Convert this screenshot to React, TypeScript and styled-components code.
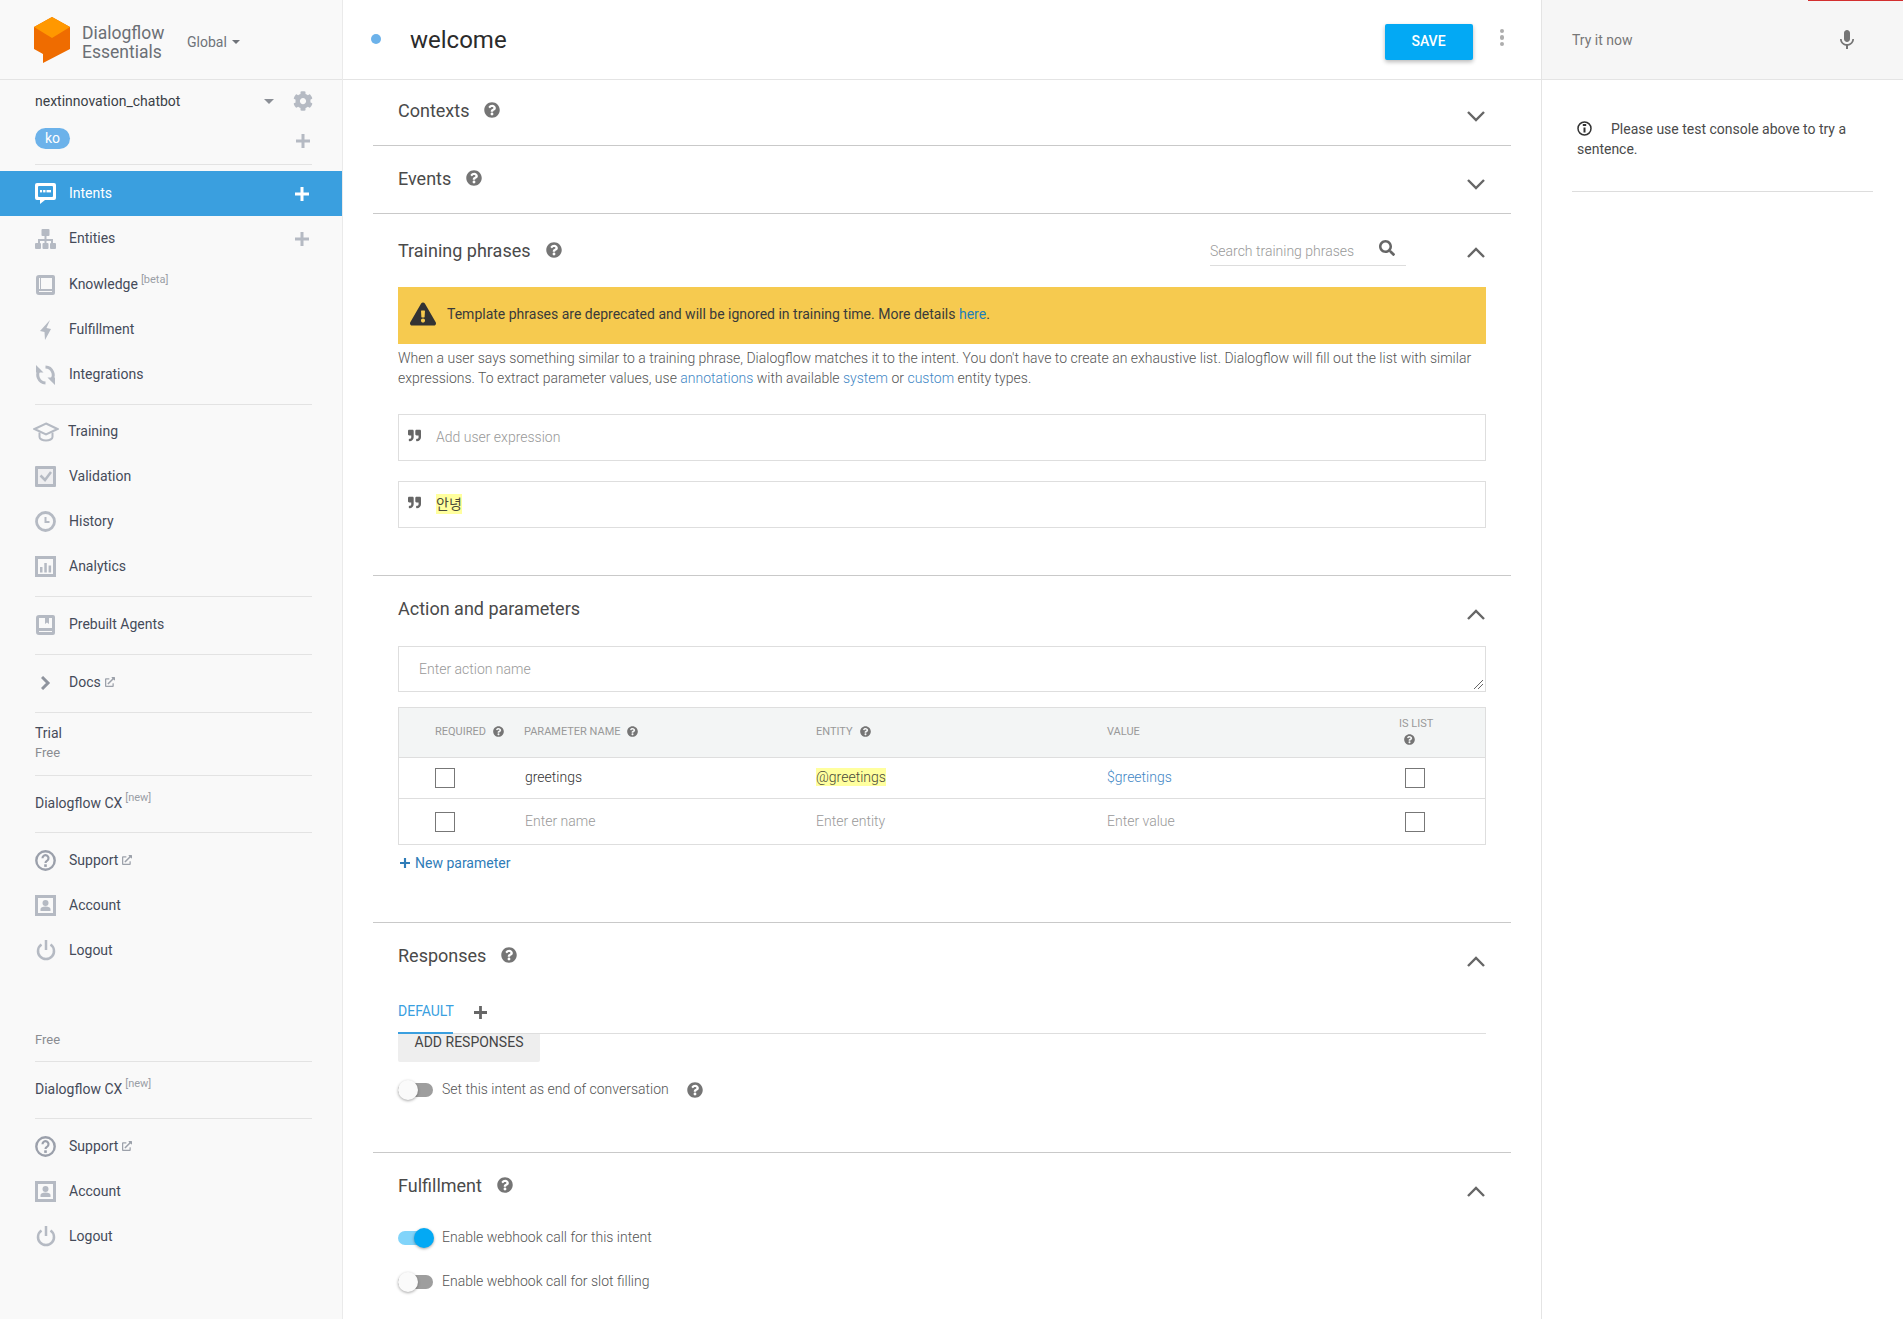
import React from 'react'
import styled, { createGlobalStyle } from 'styled-components'
import {
    FaCog,
    FaQuestionCircle,
    FaQuoteRight,
    FaExclamationTriangle,
    FaSearch,
    FaExternalLinkAlt,
} from 'react-icons/fa'
import { MdMic } from 'react-icons/md'

const GlobalStyle = createGlobalStyle`
    html, body {
        margin: 0;
        padding: 0;
        height: 100%;
        overflow: hidden;
        background: #fff;
        font-family: Roboto, "Noto Sans CJK KR", sans-serif;
        font-size: 14px;
        color: #444;
    }
    * { box-sizing: border-box; }
`

const Page = styled.div`
    display: flex;
    width: 1903px;
    height: 1319px;
    overflow: hidden;
`

/* ---------- sidebar ---------- */

const Sidebar = styled.aside`
    width: 343px;
    flex-shrink: 0;
    background: #f9f9f9;
    border-right: 1px solid #eaeaea;
    display: flex;
    flex-direction: column;
`

const BrandBar = styled.div`
    height: 80px;
    flex-shrink: 0;
    display: flex;
    align-items: center;
    padding-left: 34px;
    border-bottom: 1px solid #e4e4e4;
`

const BrandName = styled.div`
    margin-left: 12px;
    font-size: 17.5px;
    line-height: 19px;
    color: #6b6f75;
    width: 105px;
    margin-top: 6px;
`

const RegionPicker = styled.div`
    display: flex;
    align-items: center;
    gap: 5px;
    color: #6f7379;
    margin-top: 5px;
`

const Caret = styled.span<{ $size?: number; $color?: string }>`
    display: inline-block;
    width: 0;
    height: 0;
    border-left: ${(p) => p.$size ?? 4}px solid transparent;
    border-right: ${(p) => p.$size ?? 4}px solid transparent;
    border-top: ${(p) => p.$size ?? 4}px solid ${(p) => p.$color ?? '#6f7379'};
`

const AgentBlock = styled.div`
    padding: 11px 33px 0 35px;
`

const AgentRow = styled.div`
    display: flex;
    align-items: center;
    height: 20px;
    color: #3b3f46;
`

const AgentName = styled.span`
    flex: 1;
`

const GearWrap = styled.span`
    display: flex;
    margin-left: 19px;
    color: #b5bac3;
    margin-right: -4px;
`

const LangRow = styled.div`
    display: flex;
    align-items: center;
    justify-content: space-between;
    margin-top: 17px;
    height: 21px;
    svg {
        margin: 4px -1px 0 0;
    }
`

const LangPill = styled.span`
    width: 35px;
    height: 21px;
    line-height: 20px;
    border-radius: 11px;
    background: #6cb2ea;
    color: #fff;
    text-align: center;
`

const PlusGlyph = styled.svg<{ $color?: string }>`
    width: 14px;
    height: 14px;
    display: block;
    flex-shrink: 0;
    fill: ${(p) => p.$color ?? '#b5bac3'};
`

const Divider = styled.div<{ $mt?: number; $mb?: number }>`
    height: 1px;
    margin: ${(p) => p.$mt ?? 0}px 30px ${(p) => p.$mb ?? 0}px 35px;
    background: #e3e3e3;
    flex-shrink: 0;
`

const NavItem = styled.div<{ $active?: boolean; $tall?: boolean }>`
    display: flex;
    align-items: center;
    height: ${(p) => (p.$tall ? 46 : 45)}px;
    padding: 0 33px 0 35px;
    background: ${(p) => (p.$active ? '#3a9fdf' : 'transparent')};
    color: ${(p) => (p.$active ? '#fff' : '#454b59')};
    flex-shrink: 0;
`

const NavIcon = styled.span<{ $color?: string; $gap?: number }>`
    width: 21px;
    height: 21px;
    flex-shrink: 0;
    display: flex;
    align-items: center;
    justify-content: center;
    margin-right: ${(p) => p.$gap ?? 13}px;
    color: ${(p) => p.$color ?? '#b5bac3'};
    svg { flex-shrink: 0; }
`

const NavLabel = styled.span`
    flex: 1;
    display: flex;
    align-items: baseline;
    margin-bottom: 2px;
`

const Sup = styled.span`
    font-size: 11px;
    color: #9a9ea6;
    margin-left: 3px;
    position: relative;
    top: -6px;
`

const ExtIcon = styled.span`
    display: inline-flex;
    margin-left: 4px;
    color: #9ca1aa;
    align-self: center;
`

const PlanBlock = styled.div<{ $mt?: number; $pb?: number }>`
    padding: 10px 35px ${(p) => p.$pb ?? 12}px;
    margin-top: ${(p) => p.$mt ?? 0}px;
    line-height: 20px;
    color: #454b59;
`

const PlanFree = styled.div`
    font-size: 13px;
    color: #8a8d92;
`

const CxLink = styled.div`
    height: 56px;
    padding: 0 35px 2px;
    display: flex;
    align-items: center;
    color: #454b59;
`

/* ---------- main column ---------- */

const Main = styled.main`
    width: 1199px;
    flex-shrink: 0;
    border-right: 1px solid #e4e4e4;
`

const TopBar = styled.div`
    height: 80px;
    display: flex;
    align-items: center;
    border-bottom: 1px solid #e4e4e4;
    padding: 0 37px 0 28px;
`

const StatusDot = styled.span`
    width: 10px;
    height: 10px;
    border-radius: 50%;
    background: #6cb2ea;
    margin-top: -2px;
    flex-shrink: 0;
`

const IntentTitle = styled.h1`
    margin: 0 0 0 29px;
    font-size: 24px;
    font-weight: 400;
    color: #2b2b2b;
    flex: 1;
`

const SaveButton = styled.button`
    width: 88px;
    height: 36px;
    border: 0;
    border-radius: 2px;
    background: #03a9f4;
    color: #fff;
    font: 500 14px Roboto, sans-serif;
    padding: 0 0 2px;
    box-shadow: 0 2px 4px rgba(0, 0, 0, 0.28);
    margin-top: 4px;
`

const MoreDots = styled.span`
    display: flex;
    flex-direction: column;
    gap: 2px;
    margin: -4px 0 0 27px;
    i {
        width: 4.5px;
        height: 4.5px;
        border-radius: 50%;
        background: #adadad;
    }
`

const Section = styled.section<{ $h?: number; $pt: number; $open?: boolean }>`
    margin: 0 30px;
    padding: ${(p) => p.$pt}px 25px 0;
    border-bottom: ${(p) => (p.$open ? '0' : '1px solid #c9c9c9')};
    ${(p) => (p.$h ? `height: ${p.$h}px;` : '')}
`

const SectionHead = styled.div`
    display: flex;
    align-items: center;
    height: 30px;
`

const SectionTitle = styled.h2`
    margin: 0;
    font-size: 18px;
    font-weight: 400;
    color: #4a4a4a;
`

const HelpIcon = styled.span<{ $size?: number; $ml?: number }>`
    display: inline-flex;
    color: #757575;
    margin-left: ${(p) => p.$ml ?? 15}px;
    svg {
        width: ${(p) => p.$size ?? 16}px;
        height: ${(p) => p.$size ?? 16}px;
    }
`

const Chevron = styled.svg<{ $dy?: number; $ml?: number }>`
    width: 18px;
    height: 11px;
    margin-left: ${(p) => (p.$ml ? `${p.$ml}px` : 'auto')};
    margin-right: 1px;
    margin-top: ${(p) => p.$dy ?? 11}px;
    fill: none;
    stroke: #666;
    stroke-width: 2.4;
    flex-shrink: 0;
`

const PhraseSearch = styled.div`
    margin-left: auto;
    width: 196px;
    height: 31px;
    display: flex;
    align-items: center;
    justify-content: space-between;
    border-bottom: 1px solid #ddd;
    color: #999;
    font-weight: 300;
    padding-right: 11px;
    padding-top: 2px;
    svg {
        color: #666;
        width: 16px;
        height: 16px;
        margin-top: -6px;
    }
`

const Notice = styled.div<{ $mt: number }>`
    height: 57px;
    margin-top: ${(p) => p.$mt}px;
    background: #f6ca4f;
    display: flex;
    align-items: center;
    color: #3a3a3a;
    padding: 0 0 3px 12px;
    svg {
        width: 26px;
        height: 24px;
        color: #333;
        margin-right: 11px;
    }
`

const NoticeLink = styled.a`
    color: #1d7fb8;
`

const Hint = styled.div`
    margin-top: 4px;
    line-height: 20px;
    color: #555;
    font-weight: 300;
`

const HintLine = styled.div`
    white-space: nowrap;
`

const TextLink = styled.a`
    color: #3f87c5;
`

const PhraseBox = styled.div<{ $mt: number }>`
    height: 47px;
    margin-top: ${(p) => p.$mt}px;
    border: 1px solid #dedede;
    display: flex;
    align-items: center;
    padding: 0 0 2px 9px;
    svg {
        width: 13px;
        height: 13px;
        color: #666;
        margin: -2px 15px 0 0;
    }
`

const Placeholder = styled.span`
    color: #999;
    font-weight: 300;
`

const Tagged = styled.span`
    background: #ffff9e;
    color: #4a4a3a;
    padding: 1px 0;
    line-height: 18px;
`

const ActionInput = styled.div<{ $mt: number }>`
    height: 46px;
    margin-top: ${(p) => p.$mt}px;
    border: 1px solid #dedede;
    display: flex;
    align-items: center;
    padding-left: 20px;
    position: relative;
`

const ResizeGrip = styled.svg`
    position: absolute;
    right: 2px;
    bottom: 2px;
    width: 9px;
    height: 9px;
    stroke: #666;
    stroke-width: 1;
`

const ParamTable = styled.div`
    margin-top: 15px;
    border: 1px solid #dedede;
`

const ParamRow = styled.div<{ $h: number; $head?: boolean }>`
    display: grid;
    grid-template-columns: 125px 292px 291px 292px 1fr;
    align-items: center;
    height: ${(p) => p.$h}px;
    background: ${(p) => (p.$head ? '#f3f5f5' : '#fff')};
    border-bottom: 1px solid #dedede;
    &:last-child {
        border-bottom: 0;
    }
`

const HeadCell = styled.div`
    font-size: 11px;
    color: #999;
    display: flex;
    align-items: center;
    margin-bottom: 2px;
`

const RequiredCell = styled(HeadCell)`
    padding-left: 36px;
`

const IsListCell = styled(HeadCell)`
    flex-direction: column;
    align-items: flex-start;
    line-height: 15px;
    padding-left: 0;
    gap: 3px;
    margin: -3px 0 2px;
`

const ParamText = styled.div`
    margin-bottom: 2px;
    font-weight: 300;
    color: #333;
`

const NameText = styled(ParamText)`
    padding-left: 1px;
`

const CheckCell = styled.div`
    padding-left: 36px;
`

const ListCheckCell = styled.div`
    padding-left: 6px;
`

const CheckBox = styled.span`
    display: block;
    width: 20px;
    height: 20px;
    border: 1px solid #777;
`

const ValueLink = styled.span`
    color: #3f87c5;
`

const AddParam = styled.div`
    display: flex;
    align-items: center;
    gap: 5px;
    margin-top: 9px;
    color: #2f7cb8;
    line-height: 18px;
    padding-left: 2px;
    svg {
        width: 10px;
        height: 10px;
    }
`

const TabStrip = styled.div<{ $mt: number }>`
    display: flex;
    align-items: center;
    height: 41px;
    margin-top: ${(p) => p.$mt}px;
    border-bottom: 1px solid #dedede;
`

const ActiveTab = styled.div`
    height: 41px;
    line-height: 36px;
    width: 55px;
    color: #3a9fdf;
    border-bottom: 2px solid #3a9fdf;
`

const AddTab = styled.span`
    margin: -2px 0 0 21px;
    svg {
        width: 13px;
        height: 13px;
    }
`

const AddResponses = styled.div`
    width: 142px;
    height: 28px;
    background: #eee;
    border-radius: 0 0 2px 2px;
    color: #454545;
    text-align: center;
    line-height: 16px;
`

const SwitchRow = styled.div<{ $mt: number }>`
    display: flex;
    align-items: center;
    margin-top: ${(p) => p.$mt}px;
    height: 22px;
    color: #555;
`

const SwitchLabel = styled.span`
    font-weight: 300;
    margin-bottom: 2px;
`

const Track = styled.span<{ $on?: boolean }>`
    position: relative;
    display: block;
    width: 35px;
    height: 14px;
    border-radius: 7px;
    background: ${(p) => (p.$on ? '#81d4fa' : '#9e9e9e')};
    margin-right: 9px;
    flex-shrink: 0;
`

const Knob = styled.span<{ $on?: boolean }>`
    position: absolute;
    top: -3px;
    left: ${(p) => (p.$on ? 16 : 0)}px;
    width: 20px;
    height: 20px;
    border-radius: 50%;
    background: ${(p) => (p.$on ? '#03a9f4' : '#fafafa')};
    box-shadow: 0 1px 3px rgba(0, 0, 0, 0.35);
`

/* ---------- test console ---------- */

const ConsolePane = styled.aside`
    flex: 1;
    position: relative;
`

const RedTick = styled.span`
    position: absolute;
    right: 0;
    top: 0;
    width: 95px;
    height: 1px;
    background: #d32f2f;
`

const ConsoleBar = styled.div`
    height: 80px;
    background: #f6f6f6;
    border-bottom: 1px solid #e4e4e4;
    display: flex;
    align-items: center;
    justify-content: space-between;
    padding: 0 44px 0 30px;
    color: #777;
    svg {
        color: #757575;
        width: 24px;
        height: 24px;
    }
`

const ConsoleNote = styled.div`
    margin: 39px 30px 0;
    padding: 0 5px 32px;
    border-bottom: 1px solid #ddd;
    line-height: 20px;
    color: #4a4a4a;
`

const InfoMark = styled.svg`
    width: 15px;
    height: 15px;
    vertical-align: -2px;
    margin-right: 19px;
    fill: none;
    stroke: #333;
`

/* ---------- drawn icons ---------- */

const BrandLogo = () => (
    <svg width="36" height="46" viewBox="0 0 36 46">
        <path d="M0 10 18 0l18 10v22L9 46v-9l-9-5z" fill="#ef6c00" />
        <path d="M0 10 18 0l18 10-18 11z" fill="#ff9800" />
    </svg>
)

const Plus = ({ color }: { color?: string }) => (
    <PlusGlyph viewBox="0 0 14 14" $color={color}>
        <path d="M5.500 0h3v5.500H14v3H8.500V14h-3V8.500H0v-3h5.500z" />
    </PlusGlyph>
)

const IntentsIcon = () => (
    <svg width="21" height="21" viewBox="0 0 21 21">
        <path
            d="M2 0h17a2 2 0 0 1 2 2v13a2 2 0 0 1-2 2h-9l-5 4v-4H2a2 2 0 0 1-2-2V2a2 2 0 0 1 2-2z"
            fill="#fff"
        />
        <rect x="3" y="3" width="15" height="11" rx="1" fill="#3a9fdf" />
        <rect x="5" y="7" width="11" height="2.400" fill="#fff" />
        <path d="M7.600 7v3M11 7v3" stroke="#3a9fdf" />
    </svg>
)

const EntitiesIcon = () => (
    <svg width="21" height="20" viewBox="0 0 21 20" fill="currentColor">
        <rect x="6.500" y="0" width="8" height="7" rx="1" />
        <rect x="0" y="14" width="6" height="6" rx="1" />
        <rect x="7.500" y="14" width="6" height="6" rx="1" />
        <rect x="15" y="14" width="6" height="6" rx="1" />
        <path d="M9.500 7h2v3H18v4h-2v-2h-4.500v2h-2v-2H5v2H3v-4h6.500z" />
    </svg>
)

const KnowledgeIcon = () => (
    <svg width="19" height="20" viewBox="0 0 19 20" fill="currentColor">
        <path d="M3 0h14a2 2 0 0 1 2 2v16a2 2 0 0 1-2 2H3a3 3 0 0 1-3-3V3a3 3 0 0 1 3-3zm2 3v11h11V3zM3 3v11h1V3zm0 13v1h13v-1z" fillRule="evenodd" />
    </svg>
)

const BoltIcon = () => (
    <svg width="11" height="20" viewBox="0 0 11 20" fill="currentColor">
        <path d="M10 0 0 11l4.500 1L5 20l6-11-4.500-1z" />
    </svg>
)

const SyncIcon = () => (
    <svg width="21" height="20" viewBox="0 0 21 20">
        <g fill="none" stroke="currentColor" strokeWidth="3">
            <path d="M5 4.500A8 8 0 0 0 10.500 18" />
            <path d="M10.500 2A8 8 0 0 1 16 15.500" />
        </g>
        <path d="M1 0v7.500h7.500zM20 20v-7.500h-7.500z" fill="currentColor" />
    </svg>
)

const CapIcon = () => (
    <svg width="26" height="20" viewBox="0 0 26 20" fill="none" stroke="currentColor" strokeWidth="2">
        <path d="M13 1.500 24.500 7 13 12.500 1.500 7z" />
        <path d="M6.500 10.500V15c0 2 3 3.500 6.500 3.500s6.500-1.500 6.500-3.500v-4.500" />
    </svg>
)

const ValidationIcon = () => (
    <svg width="21" height="21" viewBox="0 0 21 21">
        <rect width="21" height="21" rx="1" fill="currentColor" />
        <path d="M3 3h15v15H3z" fill="#efeff1" />
        <path d="M5.500 9.500 10 14l6-8" stroke="currentColor" strokeWidth="2.500" fill="none" />
    </svg>
)

const HistoryIcon = () => (
    <svg width="21" height="21" viewBox="0 0 21 21" fill="none" stroke="currentColor">
        <circle cx="10.500" cy="10.500" r="9" strokeWidth="2.800" />
        <path d="M10.500 6v5h4" strokeWidth="2" />
    </svg>
)

const AnalyticsIcon = () => (
    <svg width="21" height="21" viewBox="0 0 21 21" fill="currentColor">
        <path fillRule="evenodd" d="M0 0h21v21H0zm3 3v15h15V3z" />
        <path d="M5 11h2.500v5.500H5zM9.300 7h2.500v9.500H9.300zM13.600 9.500h2.500v7h-2.500z" />
    </svg>
)

const PrebuiltIcon = () => (
    <svg width="19" height="20" viewBox="0 0 19 20" fill="currentColor">
        <path
            fillRule="evenodd"
            d="M3 0h14a2 2 0 0 1 2 2v16a2 2 0 0 1-2 2H3a3 3 0 0 1-3-3V3a3 3 0 0 1 3-3zm0 3v10h13V3h-3v6l-2-1.500L9 9V3zm0 13v1h13v-1z"
        />
    </svg>
)

const DocsChevron = () => (
    <svg width="10" height="14" viewBox="0 0 10 14" fill="none" stroke="#8f949e" strokeWidth="3">
        <path d="M1 1l6 6-6 6" />
    </svg>
)

const SupportIcon = () => (
    <svg width="21" height="21" viewBox="0 0 21 21" fill="none" stroke="#9ba0ab">
        <circle cx="10.500" cy="10.500" r="9.200" strokeWidth="2.400" />
        <path d="M7.500 8.200a3 3 0 1 1 4.700 2.400c-1.100.7-1.700 1.200-1.700 2.400" strokeWidth="2.200" />
        <rect x="9.200" y="14.300" width="2.600" height="2.600" fill="#9ba0ab" stroke="none" />
    </svg>
)

const AccountIcon = () => (
    <svg width="21" height="21" viewBox="0 0 21 21" fill="currentColor">
        <path fillRule="evenodd" d="M0 0h21v21H0zm3 3v15h15V3z" />
        <circle cx="10.500" cy="8" r="3" />
        <path d="M5.500 16v-2c0-1.500 2-2.500 5-2.500s5 1 5 2.500v2z" />
    </svg>
)

const PowerIcon = () => (
    <svg width="20" height="21" viewBox="0 0 20 21" fill="none" stroke="currentColor" strokeWidth="2.500">
        <path d="M10 0v10" />
        <path d="M5.500 4.500a8 8 0 1 0 9 0" />
    </svg>
)

const ChevronIcon = ({ up, dy, ml }: { up?: boolean; dy?: number; ml?: number }) => (
    <Chevron viewBox="0 0 18 11" $dy={dy} $ml={ml}>
        <path d={up ? 'M1 10 9 2l8 8' : 'M1 1l8 8 8-8'} />
    </Chevron>
)

const Ext = () => (
    <ExtIcon>
        <FaExternalLinkAlt size={10} />
    </ExtIcon>
)

const Help = ({ size, ml }: { size?: number; ml?: number }) => (
    <HelpIcon $size={size} $ml={ml}>
        <FaQuestionCircle />
    </HelpIcon>
)

const Toggle = ({ on }: { on?: boolean }) => (
    <Track $on={on}>
        <Knob $on={on} />
    </Track>
)

const AccountLinks = () => (
    <>
        <NavItem>
            <NavIcon>
                <SupportIcon />
            </NavIcon>
            <NavLabel>
                Support
                <Ext />
            </NavLabel>
        </NavItem>
        <NavItem>
            <NavIcon>
                <AccountIcon />
            </NavIcon>
            <NavLabel>Account</NavLabel>
        </NavItem>
        <NavItem>
            <NavIcon>
                <PowerIcon />
            </NavIcon>
            <NavLabel>Logout</NavLabel>
        </NavItem>
    </>
)

const App = () => (
    <Page>
        <GlobalStyle />
        <Sidebar>
            <BrandBar>
                <BrandLogo />
                <BrandName>
                    Dialogflow
                    <br />
                    Essentials
                </BrandName>
                <RegionPicker>
                    Global
                    <Caret />
                </RegionPicker>
            </BrandBar>
            <AgentBlock>
                <AgentRow>
                    <AgentName>nextinnovation_chatbot</AgentName>
                    <Caret $size={5} $color="#8b8f96" />
                    <GearWrap>
                        <FaCog size={20} />
                    </GearWrap>
                </AgentRow>
                <LangRow>
                    <LangPill>ko</LangPill>
                    <Plus />
                </LangRow>
            </AgentBlock>
            <Divider $mt={15} $mb={6} />
            <NavItem $active>
                <NavIcon>
                    <IntentsIcon />
                </NavIcon>
                <NavLabel>Intents</NavLabel>
                <Plus color="#fff" />
            </NavItem>
            <NavItem $tall>
                <NavIcon>
                    <EntitiesIcon />
                </NavIcon>
                <NavLabel>Entities</NavLabel>
                <Plus />
            </NavItem>
            <NavItem>
                <NavIcon>
                    <KnowledgeIcon />
                </NavIcon>
                <NavLabel>
                    Knowledge
                    <Sup>[beta]</Sup>
                </NavLabel>
            </NavItem>
            <NavItem>
                <NavIcon>
                    <BoltIcon />
                </NavIcon>
                <NavLabel>Fulfillment</NavLabel>
            </NavItem>
            <NavItem>
                <NavIcon>
                    <SyncIcon />
                </NavIcon>
                <NavLabel>Integrations</NavLabel>
            </NavItem>
            <Divider $mt={7} $mb={4} />
            <NavItem>
                <NavIcon $gap={12}>
                    <CapIcon />
                </NavIcon>
                <NavLabel>Training</NavLabel>
            </NavItem>
            <NavItem>
                <NavIcon>
                    <ValidationIcon />
                </NavIcon>
                <NavLabel>Validation</NavLabel>
            </NavItem>
            <NavItem>
                <NavIcon>
                    <HistoryIcon />
                </NavIcon>
                <NavLabel>History</NavLabel>
            </NavItem>
            <NavItem>
                <NavIcon>
                    <AnalyticsIcon />
                </NavIcon>
                <NavLabel>Analytics</NavLabel>
            </NavItem>
            <Divider $mt={7} $mb={5} />
            <NavItem>
                <NavIcon>
                    <PrebuiltIcon />
                </NavIcon>
                <NavLabel>Prebuilt Agents</NavLabel>
            </NavItem>
            <Divider $mt={7} $mb={5} />
            <NavItem>
                <NavIcon>
                    <DocsChevron />
                </NavIcon>
                <NavLabel>
                    Docs
                    <Ext />
                </NavLabel>
            </NavItem>
            <Divider $mt={7} />
            <PlanBlock>
                Trial
                <PlanFree>Free</PlanFree>
            </PlanBlock>
            <Divider />
            <CxLink>
                Dialogflow CX
                <Sup>[new]</Sup>
            </CxLink>
            <Divider $mb={5} />
            <AccountLinks />
            <PlanBlock $mt={47} $pb={11}>
                <PlanFree>Free</PlanFree>
            </PlanBlock>
            <Divider />
            <CxLink>
                Dialogflow CX
                <Sup>[new]</Sup>
            </CxLink>
            <Divider $mb={5} />
            <AccountLinks />
        </Sidebar>

        <Main>
            <TopBar>
                <StatusDot />
                <IntentTitle>welcome</IntentTitle>
                <SaveButton>SAVE</SaveButton>
                <MoreDots>
                    <i />
                    <i />
                    <i />
                </MoreDots>
            </TopBar>

            <Section $h={66} $pt={15}>
                <SectionHead>
                    <SectionTitle>Contexts</SectionTitle>
                    <Help />
                    <ChevronIcon dy={12} />
                </SectionHead>
            </Section>
            <Section $h={68} $pt={17}>
                <SectionHead>
                    <SectionTitle>Events</SectionTitle>
                    <Help />
                    <ChevronIcon dy={13} />
                </SectionHead>
            </Section>
            <Section $h={362} $pt={21}>
                <SectionHead>
                    <SectionTitle>Training phrases</SectionTitle>
                    <Help />
                    <PhraseSearch>
                        Search training phrases
                        <FaSearch />
                    </PhraseSearch>
                    <ChevronIcon up dy={5} ml={61} />
                </SectionHead>
                <Notice $mt={22}>
                    <FaExclamationTriangle />
                    <span>
                        Template phrases are deprecated and will be ignored in training time. More details{' '}
                        <NoticeLink>here</NoticeLink>.
                    </span>
                </Notice>
                <Hint>
                    <HintLine>
                        When a user says something similar to a training phrase, Dialogflow matches it to the intent.
                        You don't have to create an exhaustive list. Dialogflow will fill out the list with similar
                    </HintLine>
                    <HintLine>
                        expressions. To extract parameter values, use <TextLink>annotations</TextLink> with available{' '}
                        <TextLink>system</TextLink> or <TextLink>custom</TextLink> entity types.
                    </HintLine>
                </Hint>
                <PhraseBox $mt={26}>
                    <FaQuoteRight />
                    <Placeholder>Add user expression</Placeholder>
                </PhraseBox>
                <PhraseBox $mt={20}>
                    <FaQuoteRight />
                    <Tagged>안녕</Tagged>
                </PhraseBox>
            </Section>
            <Section $h={347} $pt={17}>
                <SectionHead>
                    <SectionTitle>Action and parameters</SectionTitle>
                    <ChevronIcon up dy={12} />
                </SectionHead>
                <ActionInput $mt={23}>
                    <Placeholder>Enter action name</Placeholder>
                    <ResizeGrip viewBox="0 0 9 9">
                        <path d="M0 9 9 0M4 9l5-5" />
                    </ResizeGrip>
                </ActionInput>
                <ParamTable>
                    <ParamRow $h={50} $head>
                        <RequiredCell>
                            REQUIRED
                            <Help size={11} ml={7} />
                        </RequiredCell>
                        <HeadCell>
                            PARAMETER NAME
                            <Help size={11} ml={6} />
                        </HeadCell>
                        <HeadCell>
                            ENTITY
                            <Help size={11} ml={7} />
                        </HeadCell>
                        <HeadCell>VALUE</HeadCell>
                        <IsListCell>
                            IS LIST
                            <Help size={11} ml={5} />
                        </IsListCell>
                    </ParamRow>
                    <ParamRow $h={41}>
                        <CheckCell>
                            <CheckBox />
                        </CheckCell>
                        <NameText>greetings</NameText>
                        <ParamText>
                            <Tagged>@greetings</Tagged>
                        </ParamText>
                        <ParamText>
                            <ValueLink>$greetings</ValueLink>
                        </ParamText>
                        <ListCheckCell>
                            <CheckBox />
                        </ListCheckCell>
                    </ParamRow>
                    <ParamRow $h={45}>
                        <CheckCell>
                            <CheckBox />
                        </CheckCell>
                        <NameText>
                            <Placeholder>Enter name</Placeholder>
                        </NameText>
                        <ParamText>
                            <Placeholder>Enter entity</Placeholder>
                        </ParamText>
                        <ParamText>
                            <Placeholder>Enter value</Placeholder>
                        </ParamText>
                        <ListCheckCell>
                            <CheckBox />
                        </ListCheckCell>
                    </ParamRow>
                </ParamTable>
                <AddParam>
                    <Plus color="#2f7cb8" />
                    New parameter
                </AddParam>
            </Section>
            <Section $h={230} $pt={17}>
                <SectionHead>
                    <SectionTitle>Responses</SectionTitle>
                    <Help />
                    <ChevronIcon up dy={13} />
                </SectionHead>
                <TabStrip $mt={23}>
                    <ActiveTab>DEFAULT</ActiveTab>
                    <AddTab>
                        <Plus color="#666" />
                    </AddTab>
                </TabStrip>
                <AddResponses>ADD RESPONSES</AddResponses>
                <SwitchRow $mt={17}>
                    <Toggle />
                    <SwitchLabel>Set this intent as end of conversation</SwitchLabel>
                    <Help ml={18} />
                </SwitchRow>
            </Section>
            <Section $open $pt={17}>
                <SectionHead>
                    <SectionTitle>Fulfillment</SectionTitle>
                    <Help />
                    <ChevronIcon up dy={13} />
                </SectionHead>
                <SwitchRow $mt={27}>
                    <Toggle on />
                    <SwitchLabel>Enable webhook call for this intent</SwitchLabel>
                </SwitchRow>
                <SwitchRow $mt={22}>
                    <Toggle />
                    <SwitchLabel>Enable webhook call for slot filling</SwitchLabel>
                </SwitchRow>
            </Section>
        </Main>

        <ConsolePane>
            <RedTick />
            <ConsoleBar>
                Try it now
                <MdMic />
            </ConsoleBar>
            <ConsoleNote>
                <InfoMark viewBox="0 0 15 15">
                    <circle cx="7.500" cy="7.500" r="6.500" strokeWidth="1.500" />
                    <path d="M7.500 6.500v5M5.800 4h3.400" strokeWidth="2" />
                </InfoMark>
                Please use test console above to try a sentence.
            </ConsoleNote>
        </ConsolePane>
    </Page>
)

export default App
